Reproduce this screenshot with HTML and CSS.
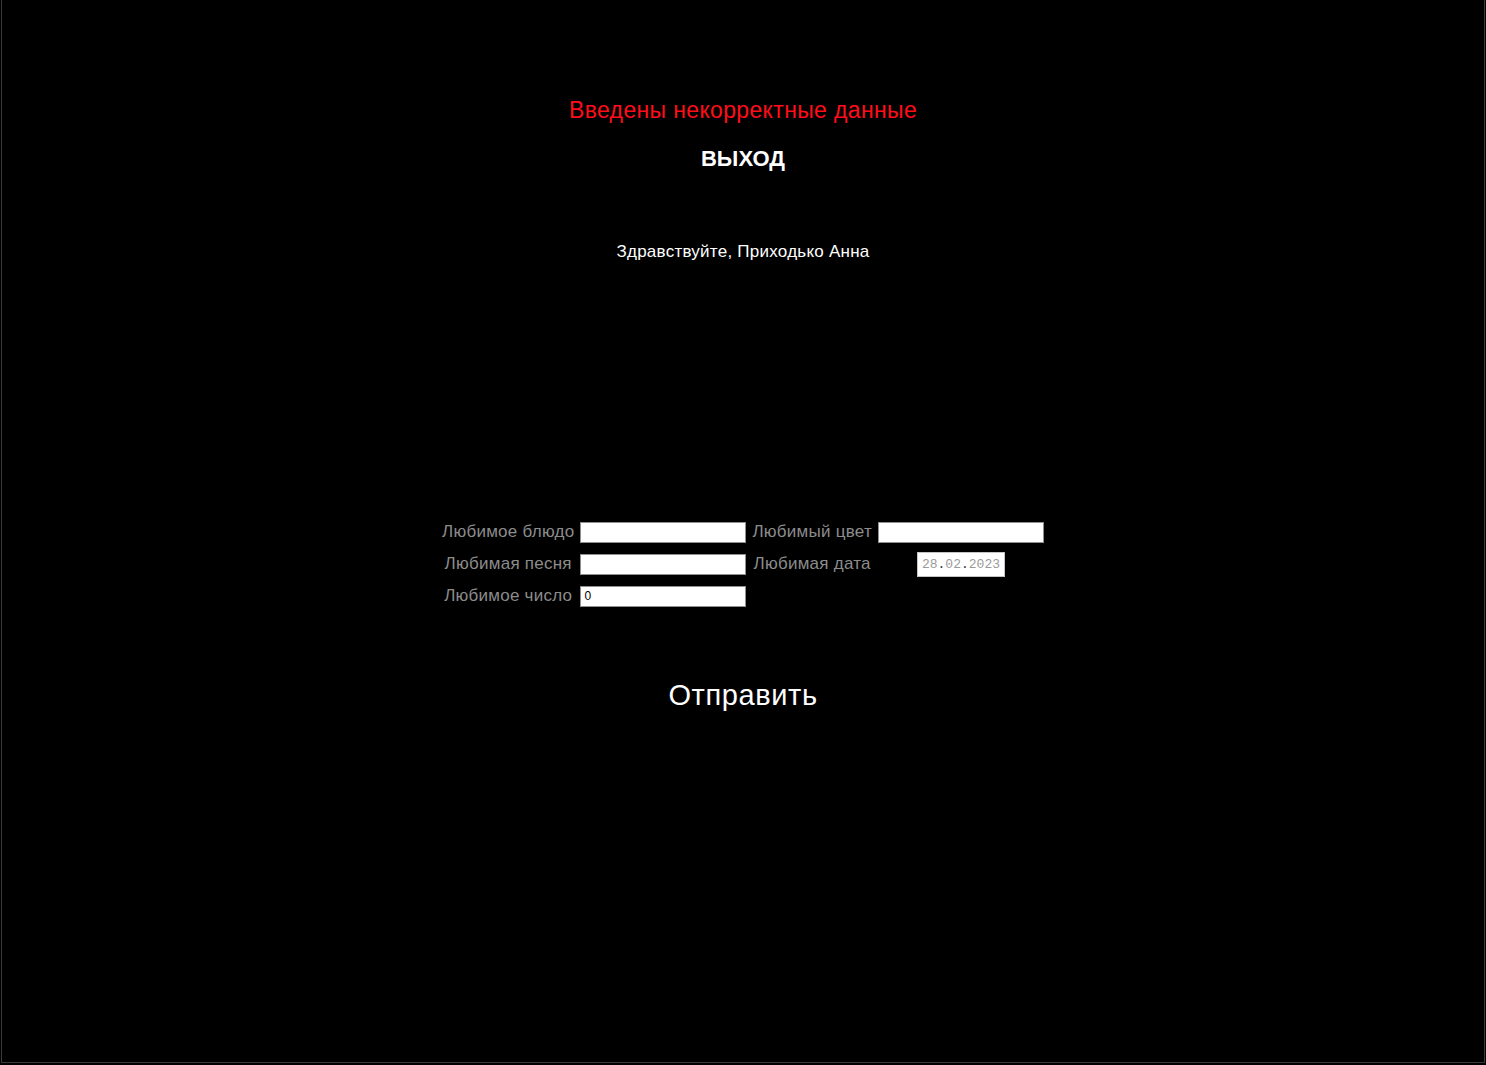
FILE: index.html
```html
<!DOCTYPE html>
<html lang="ru">
<head>
    <meta charset="UTF-8">
    <title>Анкета</title>
    <link rel="stylesheet" href="styles.css">
</head>
<body>
    <div class="page">
        <!-- Error message and logout -->
        <p class="error-text">Введены некорректные данные</p>
        <a class="logout-link" href="#">ВЫХОД</a>

        <p class="greeting">Здравствуйте, Приходько Анна</p>

        <!-- Form with favourite things -->
        <form class="fav-form">
            <table class="fav-table">
                <tr>
                    <td class="fav-label">Любимое блюдо</td>
                    <td><input class="fav-input" type="text"></td>
                    <td class="fav-label">Любимый цвет</td>
                    <td><input class="fav-input" type="text"></td>
                </tr>
                <tr>
                    <td class="fav-label">Любимая песня</td>
                    <td><input class="fav-input" type="text"></td>
                    <td class="fav-label">Любимая дата</td>
                    <td><span class="date-input">28<span class="date-dot">.</span>02<span class="date-dot">.</span>2023</span></td>
                </tr>
                <tr>
                    <td class="fav-label">Любимое число</td>
                    <td><input class="fav-input" type="text" value="0"></td>
                    <td></td>
                    <td></td>
                </tr>
            </table>
            <button class="submit-button" type="button">Отправить</button>
        </form>
    </div>
</body>
</html>
```

FILE: styles.css
```css
/* Black page with thin frame */
html {
    background: #000;
}

body {
    box-sizing: border-box;
    background: #000;
    border: 1px solid #3a3a3a;
    border-top: none;
    margin: 0 1px 2px 1px;
    height: 1063px;
    font-family: "Liberation Sans", Arial, sans-serif;
    color: #fff;
}

.page {
    display: flex;
    flex-direction: column;
    align-items: center;
    padding-top: 97px;
}

/* Error message */
.error-text {
    margin: 0;
    color: #ff0d1a;
    font-size: 23px;
    letter-spacing: 0.35px;
    line-height: 26px;
}

/* Logout link */
.logout-link {
    margin-top: 23px;
    color: #fff;
    font-size: 22px;
    font-weight: bold;
    line-height: 26px;
    text-decoration: none;
}

.greeting {
    margin: 70px 0 0;
    font-size: 17px;
    letter-spacing: 0.25px;
    line-height: 20px;
}

/* Favourite things form */
.fav-form {
    display: flex;
    flex-direction: column;
    align-items: center;
    margin-top: 253px;
}

.fav-table {
    border-spacing: 2px;
}

.fav-table td {
    padding: 1px 2px;
    height: 28px;
    text-align: center;
    vertical-align: middle;
}

.fav-label {
    color: #8c8c8c;
    font-size: 17px;
    letter-spacing: 0.25px;
}

.fav-input {
    box-sizing: border-box;
    width: 166px;
    height: 21px;
    margin: 0;
    padding: 1px 3px;
    border: 1px solid #8f8f8f;
    background: #fff;
    color: #000;
    font-family: "Liberation Sans", Arial, sans-serif;
    font-size: 12px;
    display: block;
}

.date-input {
    display: inline-block;
    box-sizing: border-box;
    width: 88px;
    height: 25px;
    padding: 0 4px;
    border: 1px solid #c4c4c4;
    background: #fff;
    color: #9a9a9a;
    font-family: "Liberation Mono", "Courier New", monospace;
    font-size: 13px;
    line-height: 23px;
    vertical-align: middle;
}

.date-dot {
    color: #333;
}

/* Submit button without frame */
.submit-button {
    margin-top: 66px;
    padding: 0;
    background: none;
    border: none;
    color: #fff;
    font-family: "Liberation Sans", Arial, sans-serif;
    font-size: 29px;
    letter-spacing: 0.6px;
    line-height: 32px;
    cursor: pointer;
}
```
